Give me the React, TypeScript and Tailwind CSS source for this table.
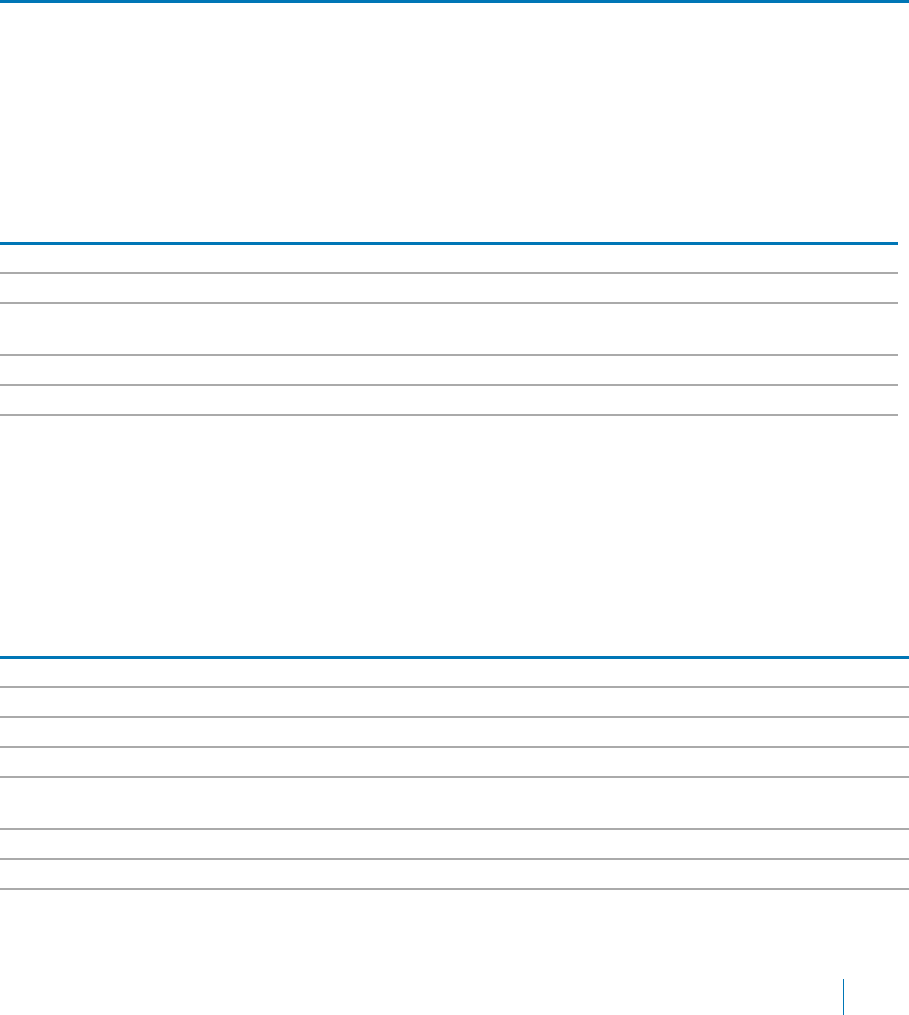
import React from "react";

const rows1 = [27, 28, 50, 28, 28];
const rows2 = [27, 28, 28, 28, 50, 28, 28];

function Table({ rows, widthClass }: { rows: number[]; widthClass: string }) {
  return (
    <div className={`${widthClass} flex flex-col border-t-[3px] border-[#0076b6]`}>
      {rows.map((h, i) => (
        <div key={i} className="border-b-2 border-[#aaaaaa]" style={{ height: h + 2 }} />
      ))}
    </div>
  );
}

export default function App() {
  return (
    <div className="w-[909px] h-[1015px] overflow-hidden bg-white flex flex-col" style={{ fontFamily: '"Liberation Sans", Arial, sans-serif' }}>
      <div className="h-[3px] w-full bg-[#0076b6]" />
      <div className="mt-[239px]">
        <Table rows={rows1} widthClass="w-[898px]" />
      </div>
      <div className="mt-[240px]">
        <Table rows={rows2} widthClass="w-full" />
      </div>
      <div className="mt-[89px] flex justify-end pr-[65px]">
        <div className="w-px h-[36px] bg-[#0076b6]" />
      </div>
    </div>
  );
}
